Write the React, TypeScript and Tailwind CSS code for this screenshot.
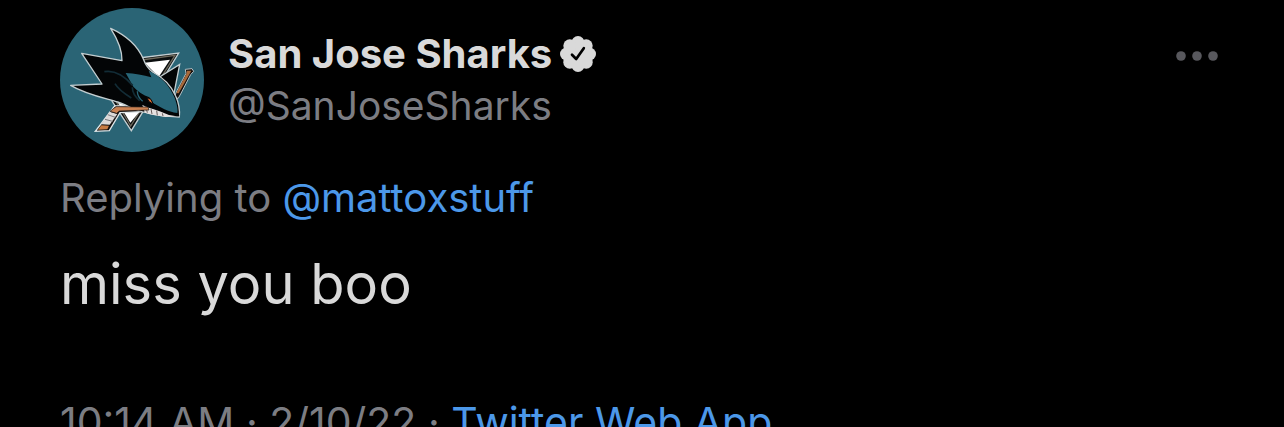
import React from "react";

const Avatar: React.FC = () => {
  return (
    <svg viewBox="12 12 432 432" className="size-36 shrink-0" role="img" aria-label="San Jose Sharks logo">
      <circle cx="228" cy="228" r="216" fill="#2a6475" />
      {/* triangle behind the shark */}
      <path d="M248 162 L368 147 L226 380 L166 288 Z" fill="#0a0d0e" stroke="#c3ced1" strokeWidth="4" />
      <path d="M256 168 L357 154 L224 366 L180 292 Z" fill="none" stroke="#6e695c" strokeWidth="4" />
      <path d="M266 176 L342 167 L308 219 Z" fill="#fff" />
      <path d="M186 296 L260 312 L223 356 Z" fill="#fff" />
      {/* hockey stick */}
      <path d="M388 196 L408 194 L413 202 L404 212 L374 270 L366 284 L356 276 L363 260 L390 208 Z" fill="#15100e" stroke="#b5c1c5" strokeWidth="3" />
      <path d="M393 200 L406 200 L402 208 L368 268 L361 267 L391 210 Z" fill="#a8693a" />
      <path d="M176 306 L272 305 L280 322 L192 326 L160 380 L118 382 Z" fill="#15100e" stroke="#dfe6e8" strokeWidth="4" />
      <path d="M160 323 L184 330 L161 362 L136 361 Z" fill="#dcd9d8" />
      <path d="M155 332 L178 340 M147 346 L170 352" stroke="#77777b" strokeWidth="3" />
      <path d="M136 364 L159 365 L154 376 L126 377 Z" fill="#c77b42" />
      {/* rear fin */}
      <path d="M306 222 L371 181 L354 269 L338 262 Z" fill="#030506" stroke="#c3ced1" strokeWidth="4" />
      {/* body */}
      <path
        d="M164 73 C208 93 245 125 262 165 C269 184 279 197 291 205 C322 221 347 248 359 276 C370 300 372 319 370 339 C340 338 303 335 272 326 C241 322 215 304 185 294 C145 282 87 270 44 244 L138 240 L77 148 L198 170 C199 135 183 103 164 73 Z"
        fill="#030506"
        stroke="#c3ced1"
        strokeWidth="4"
        strokeLinejoin="round"
      />
      {/* head */}
      <path d="M209 207 C236 207 262 214 286 220 L278 200 C318 218 342 248 355 279 C364 303 366 318 364 327 C335 324 314 310 292 298 L280 280 C262 274 244 262 232 248 Z" fill="#286678" />
      <path d="M145 203 C177 197 207 218 230 244 M177 239 C187 257 205 269 226 282 M229 250 C229 265 239 280 251 290" fill="none" stroke="#122c36" strokeWidth="5" />
      <path d="M244 262 C244 272 250 284 260 292" fill="none" stroke="#286678" strokeWidth="4" />
      <path d="M288 296 C314 316 340 328 368 328 L370 337 C333 337 310 327 290 314 Z" fill="#030506" />
      <path d="M272 280 L285 286 L292 301 L279 293 Z" fill="#d96932" stroke="#030506" strokeWidth="3" />
      {/* teeth */}
      <path d="M259 303 L278 311 L291 315 L311 322 L339 333 L362 337 L328 339 L281 331 L266 326 Z" fill="#e5e1e0" />
      <path d="M269 307 L274 326 M285 315 L288 330 M302 320 L304 334 M319 328 L321 336" stroke="#665b5a" strokeWidth="3" />
      <path d="M180 308 L276 309 L279 318 L190 321 L182 328 L162 322 Z" fill="#c98152" stroke="#1a1310" strokeWidth="2" />
    </svg>
  );
};

const VerifiedBadge: React.FC = () => {
  return (
    <svg viewBox="0 0 36 36" className="size-9 shrink-0" role="img" aria-label="Verified account">
      <g fill="#d9d9d9">
        <circle cx="18" cy="18" r="14" />
        <circle cx="18" cy="6.5" r="6.5" />
        <circle cx="26.2" cy="9.8" r="6.5" />
        <circle cx="29.5" cy="18" r="6.5" />
        <circle cx="26.2" cy="26.2" r="6.5" />
        <circle cx="18" cy="29.5" r="6.5" />
        <circle cx="9.8" cy="26.2" r="6.5" />
        <circle cx="6.5" cy="18" r="6.5" />
        <circle cx="9.8" cy="9.8" r="6.5" />
      </g>
      <path d="M12 18.8 L16.2 23 L23.8 12.2" fill="none" stroke="#000" strokeWidth="2.7" strokeLinecap="round" strokeLinejoin="round" />
    </svg>
  );
};

const App: React.FC = () => {
  return (
    <main className="h-screen overflow-hidden bg-black px-15 pt-2 font-['Inter',sans-serif] text-[40px] leading-[52px] text-[#7c7d83]">
      <article>
        <header className="flex items-center gap-6">
          <Avatar />
          <div className="min-w-0 flex-1">
            <div className="flex items-center gap-2">
              <h1 className="font-bold text-[#d9d9d9]">San Jose Sharks</h1>
              <VerifiedBadge />
            </div>
            <p className="text-[39px]">@SanJoseSharks</p>
          </div>
          <button type="button" aria-label="More" className="mt-6 mr-[5px] self-start py-4">
            <svg viewBox="0 0 44 16" className="h-4 w-11" fill="#58585d">
              <circle cx="6" cy="8" r="4.8" />
              <circle cx="22" cy="8" r="4.8" />
              <circle cx="38" cy="8" r="4.8" />
            </svg>
          </button>
        </header>

        <p className="mt-5">
          Replying to <a href="#mattoxstuff" className="text-[#4c98e9]">@mattoxstuff</a>
        </p>

        <p className="mt-6 text-[56px] leading-[72px] text-[#d9d9d9]">miss you boo</p>

        <p className="mt-19 text-[41px] whitespace-nowrap">
          10:14 AM · 2/10/22 · <a href="#source" className="text-[#4c98e9]">Twitter Web App</a>
        </p>
      </article>
    </main>
  );
};

export default App;
